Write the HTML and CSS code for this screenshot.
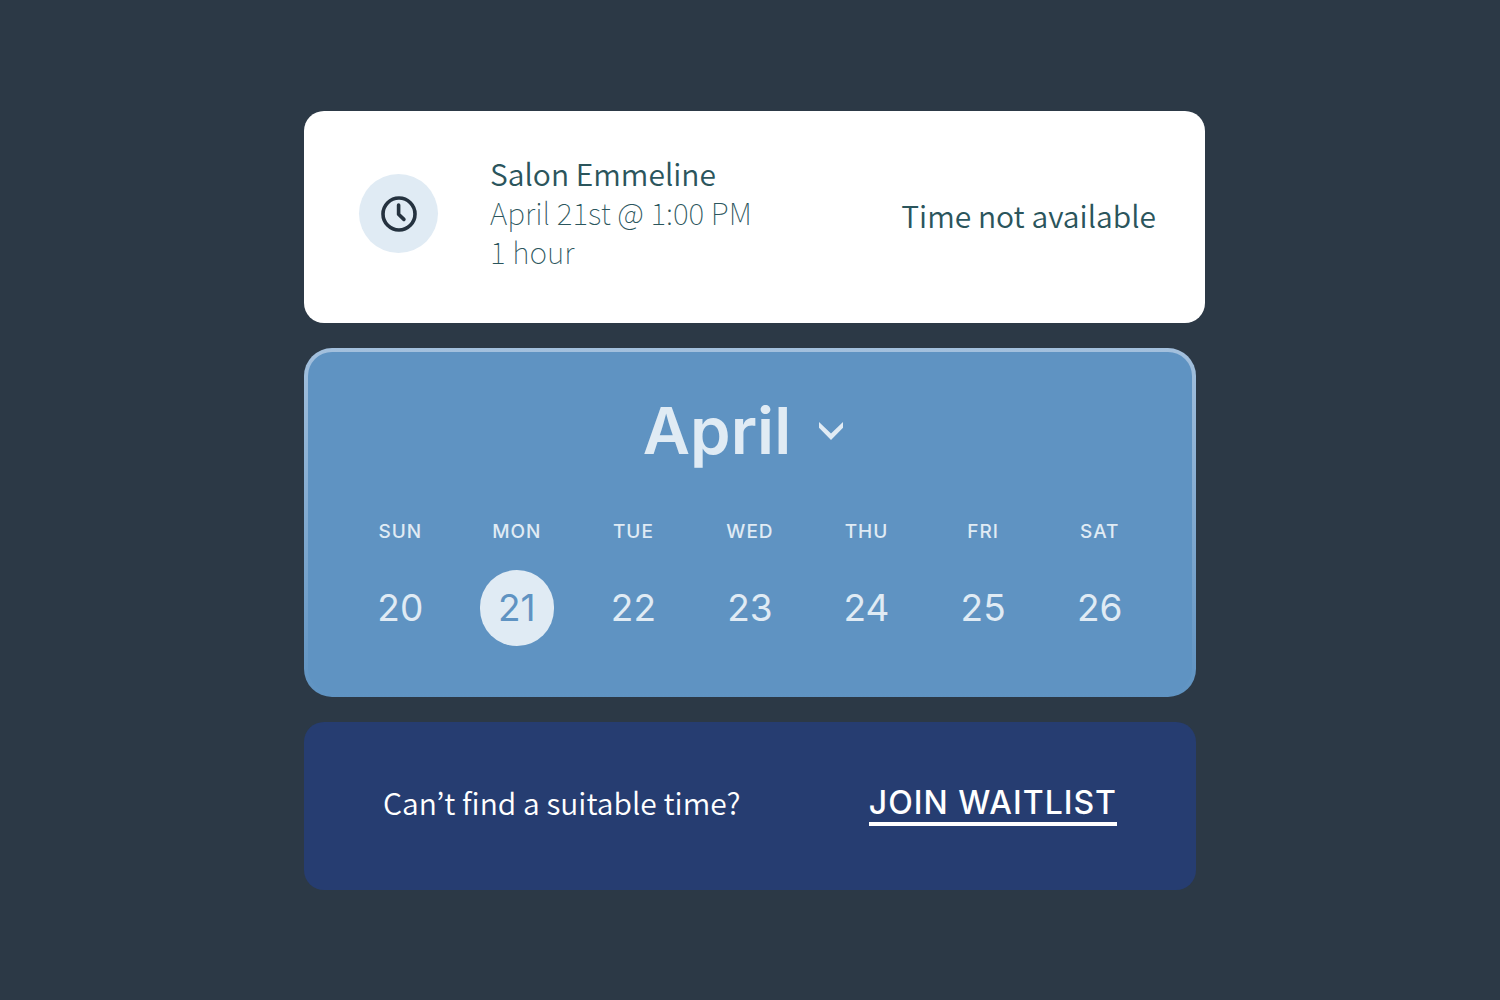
FILE: index.html
```
<!DOCTYPE html>
<html lang="en">
<head>
  <meta charset="UTF-8">
  <meta name="viewport" content="width=device-width, initial-scale=1.0">
  <title>Salon Emmeline</title>
  <link rel="stylesheet" href="styles.css">
</head>
<body>
  <main class="booking">
    <section class="card appointment">
      <div class="clock">
        <svg viewBox="0 0 36 36" width="36" height="36" fill="none" stroke="currentColor" aria-hidden="true">
          <circle cx="18" cy="18" r="16" stroke-width="3.6"/>
          <path d="M17.6 9v9.3l5.3 5.1" stroke-width="3.6" stroke-linecap="round" stroke-linejoin="round"/>
        </svg>
      </div>
      <div class="details">
        <h1>Salon Emmeline</h1>
        <p>April 21st @ 1:00 PM</p>
        <p>1 hour</p>
      </div>
      <p class="availability">Time not available</p>
    </section>

    <section class="card calendar">
      <label class="month">
        <select aria-label="Month">
          <option>March</option>
          <option selected>April</option>
          <option>May</option>
        </select>
        <svg viewBox="0 0 24 18" width="24" height="18" fill="currentColor" aria-hidden="true">
          <path d="M0 0l12 11.6L24 0v5.8L12 18 0 5.8z"/>
        </svg>
      </label>

      <table class="week">
        <thead>
          <tr>
            <th>SUN</th>
            <th>MON</th>
            <th>TUE</th>
            <th>WED</th>
            <th>THU</th>
            <th>FRI</th>
            <th>SAT</th>
          </tr>
        </thead>
        <tbody>
          <tr>
            <td><button class="day">20</button></td>
            <td><button class="day selected">21</button></td>
            <td><button class="day">22</button></td>
            <td><button class="day">23</button></td>
            <td><button class="day">24</button></td>
            <td><button class="day">25</button></td>
            <td><button class="day">26</button></td>
          </tr>
        </tbody>
      </table>
    </section>

    <section class="card waitlist">
      <p>Can’t find a suitable time?</p>
      <a href="#">JOIN WAITLIST</a>
    </section>
  </main>
</body>
</html>
```
FILE: styles.css
```
:root {
  --page: #2c3946;
  --teal: #2b555c;
  --blue: #5f93c2;
  --pale: #e0ebf4;
  --navy: #263d71;
  --ink: #25323f;
  --text: "Noto Sans CJK KR", "Noto Sans", sans-serif;
  --display: Inter, "Liberation Sans", sans-serif;
}

* {
  box-sizing: border-box;
  margin: 0;
  padding: 0;
}

body {
  min-height: 100vh;
  display: flex;
  align-items: center;
  justify-content: center;
  background: var(--page);
  font-family: var(--text);
  font-size: 30px;
  font-weight: 350;
  line-height: 39px;
}

.booking {
  width: 100%;
  max-width: 892px;
  display: flex;
  flex-direction: column;
  gap: 25px;
}

.card {
  border-radius: 20px;
}

/* the top card is a little wider than the rest of the stack */
.appointment {
  display: flex;
  align-items: center;
  margin-right: -9px;
  padding: 43px 49px 49px 55px;
  background: white;
  color: var(--teal);
}

.clock {
  display: flex;
  align-items: center;
  justify-content: center;
  width: 79px;
  height: 79px;
  border-radius: 50%;
  background: var(--pale);
  color: var(--ink);
}

.details {
  flex: 1;
  margin-left: 52px;
  padding-bottom: 3px;
  font-weight: 100;
}

.details h1 {
  font-size: inherit;
  font-weight: 350;
}

.availability {
  padding-top: 4px;
}

.calendar {
  padding: 39px 34px 47px;
  border: 4px solid transparent;
  border-radius: 28px;
  background:
    linear-gradient(var(--blue), var(--blue)) padding-box,
    linear-gradient(#a3c0dd, var(--blue)) border-box;
  color: var(--pale);
  font-family: var(--display);
}

.month {
  display: flex;
  align-items: center;
  justify-content: center;
  gap: 28px;
  margin-bottom: 49px;
  padding-right: 14px;
}

.month select {
  appearance: none;
  field-sizing: content;
  border: none;
  background: none;
  color: inherit;
  font-family: inherit;
  font-size: 65px;
  font-weight: 600;
  line-height: 80px;
}

.week {
  width: 100%;
  table-layout: fixed;
  border-collapse: collapse;
  text-align: center;
}

.week th {
  padding-bottom: 26px;
  font-size: 19px;
  font-weight: 500;
  line-height: 24px;
  letter-spacing: 1px;
}

.day {
  display: block;
  width: 74px;
  height: 76px;
  margin: 0 auto;
  border: none;
  border-radius: 37px;
  background: none;
  color: inherit;
  font-family: inherit;
  font-size: 37px;
  cursor: pointer;
}

.day.selected {
  background: var(--pale);
  color: var(--blue);
}

.waitlist {
  display: flex;
  align-items: center;
  justify-content: space-between;
  padding: 61px 79px 64px;
  background: var(--navy);
  color: white;
}

.waitlist p {
  padding-bottom: 4px;
}

.waitlist a {
  border-bottom: 4px solid white;
  color: inherit;
  font-family: var(--display);
  font-size: 32px;
  font-weight: 500;
  letter-spacing: 1px;
  text-decoration: none;
}
```
